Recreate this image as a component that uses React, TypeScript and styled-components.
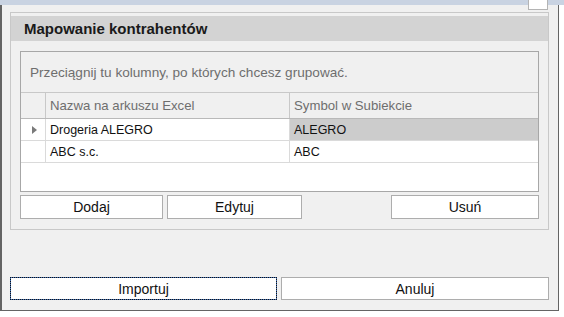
import React from "react";
import styled, { createGlobalStyle } from "styled-components";

const Global = createGlobalStyle`
  html, body { margin: 0; padding: 0; background: #ffffff; }
  body { font-family: "Liberation Sans", Arial, sans-serif; width: 564px; height: 317px; overflow: hidden; }
  * { box-sizing: border-box; }
`;

const Page = styled.div`
  position: relative;
  width: 564px;
  height: 317px;
  display: flex;
  flex-direction: column;
`;

const TopStrip = styled.div`
  height: 5px;
  background: #c9d3e2;
  flex: none;
`;

const CornerBox = styled.div`
  position: absolute;
  left: 528px;
  top: -1px;
  width: 20px;
  height: 11px;
  background: #ffffff;
  border: 1px solid #b4b4b4;
`;

const Window = styled.div`
  width: 559px;
  height: 306px;
  background: #f0f0f0;
  border-left: 2px solid #646464;
  border-right: 1px solid #646464;
  border-bottom: 1px solid #646464;
  display: flex;
  flex-direction: column;
  padding: 7px 9px 10px 8px;
`;

const Panel = styled.section`
  width: 539px;
  height: 218px;
  border: 1px solid #c8c8c8;
  padding-top: 3px;
  display: flex;
  flex-direction: column;
`;

const PanelHeader = styled.div`
  height: 25px;
  background: #d3d3d3;
  font-weight: bold;
  font-size: 15px;
  color: #1a1a1a;
  padding-left: 13px;
  display: flex;
  align-items: center;
`;

const PanelBody = styled.div`
  padding: 10px 9px 0 9px;
  display: flex;
  flex-direction: column;
`;

const Grid = styled.div`
  height: 141px;
  border: 1px solid #a7a7a7;
  background: #ffffff;
  display: flex;
  flex-direction: column;
`;

const GroupPanel = styled.div`
  height: 41px;
  background: #f0f0f0;
  border-bottom: 1px solid #c8c8c8;
  color: #6e6e6e;
  font-size: 13.6px;
  padding-left: 9px;
  display: flex;
  align-items: center;
`;

const Row = styled.div<{ $header?: boolean }>`
  display: grid;
  grid-template-columns: 25px 244px 1fr;
  height: ${(p) => (p.$header ? "26px" : "22px")};
  background: ${(p) => (p.$header ? "#f0f0f0" : "#ffffff")};
  border-bottom: 1px solid ${(p) => (p.$header ? "#b9b9b9" : "#dadada")};
`;

const Indicator = styled.div<{ $header?: boolean }>`
  border-right: 1px solid ${(p) => (p.$header ? "#c8c8c8" : "#dadada")};
  background: ${(p) => (p.$header ? "#f0f0f0" : "#ffffff")};
  display: flex;
  align-items: center;
  padding-left: 11px;
`;

const Cell = styled.div<{ $header?: boolean; $selected?: boolean; $last?: boolean }>`
  font-size: ${(p) => (p.$header ? "13.2px" : "12.5px")};
  color: ${(p) => (p.$header ? "#6e6e6e" : "#111111")};
  background: ${(p) => (p.$selected ? "#cccccc" : "transparent")};
  border-right: ${(p) => (p.$last ? "none" : `1px solid ${p.$header ? "#c8c8c8" : "#dadada"}`)};
  padding-left: 4px;
  display: flex;
  align-items: center;
  white-space: nowrap;
  overflow: hidden;
`;

const Arrow = styled.span`
  width: 0;
  height: 0;
  border-top: 4px solid transparent;
  border-bottom: 4px solid transparent;
  border-left: 5px solid #7a7a7a;
`;

const ButtonRow = styled.div`
  display: flex;
  margin-top: 3px;
  gap: 4px;
`;

const Button = styled.button<{ $w: number; $push?: boolean; $focus?: boolean; $h?: number }>`
  width: ${(p) => p.$w}px;
  height: ${(p) => p.$h ?? 24}px;
  margin-left: ${(p) => (p.$push ? "auto" : "0")};
  background: #ffffff;
  border: 1px solid ${(p) => (p.$focus ? "#3e6db5" : "#adadad")};
  outline: ${(p) => (p.$focus ? "1px dotted #111" : "none")};
  outline-offset: -1px;
  font-family: "Liberation Sans", Arial, sans-serif;
  font-size: 14px;
  color: #111111;
  padding: 0;
  display: flex;
  align-items: center;
  justify-content: center;
`;

const Footer = styled.div`
  margin-top: auto;
  display: flex;
  gap: 4px;
  width: 539px;
`;

export default function App() {
  return (
    <Page>
      <Global />
      <TopStrip />
      <CornerBox />
      <Window>
        <Panel>
          <PanelHeader>Mapowanie kontrahentów</PanelHeader>
          <PanelBody>
            <Grid>
              <GroupPanel>Przeciągnij tu kolumny, po których chcesz grupować.</GroupPanel>
              <Row $header>
                <Indicator $header />
                <Cell $header>Nazwa na arkuszu Excel</Cell>
                <Cell $header $last>Symbol w Subiekcie</Cell>
              </Row>
              <Row>
                <Indicator>
                  <Arrow />
                </Indicator>
                <Cell>Drogeria ALEGRO</Cell>
                <Cell $selected $last>ALEGRO</Cell>
              </Row>
              <Row>
                <Indicator />
                <Cell>ABC s.c.</Cell>
                <Cell $last>ABC</Cell>
              </Row>
            </Grid>
            <ButtonRow>
              <Button $w={143}>Dodaj</Button>
              <Button $w={135}>Edytuj</Button>
              <Button $w={148} $push>Usuń</Button>
            </ButtonRow>
          </PanelBody>
        </Panel>
        <Footer>
          <Button $w={267} $h={23} $focus>Importuj</Button>
          <Button $w={268} $h={23}>Anuluj</Button>
        </Footer>
      </Window>
    </Page>
  );
}
